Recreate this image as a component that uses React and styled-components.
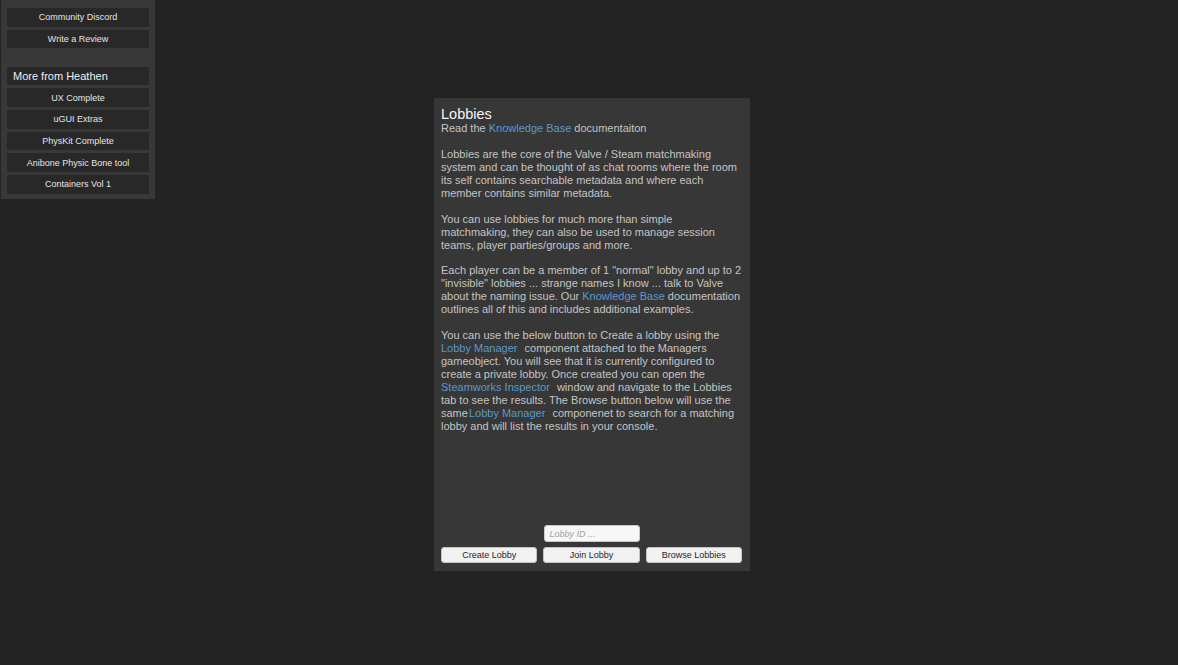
import React from "react";
import styled, { createGlobalStyle } from "styled-components";

const Global = createGlobalStyle`
  html, body {
    margin: 0;
    padding: 0;
    background: #232323;
  }
  body {
    font-family: "Liberation Sans", Arial, sans-serif;
  }
  * { box-sizing: border-box; }
`;

const Page = styled.div`
  width: 1178px;
  height: 665px;
  display: grid;
  grid-template: 1fr / 1fr;
  background: #232323;
  overflow: hidden;
`;

const SidePanel = styled.nav`
  grid-area: 1 / 1;
  align-self: start;
  justify-self: start;
  margin-left: 1px;
  width: 154px;
  background: #383838;
  padding: 8px 6px 5.4px 6px;
  display: flex;
  flex-direction: column;
  gap: 3px;
`;

const SideButton = styled.button`
  height: 18.7px;
  border: none;
  border-radius: 1px;
  background: #282828;
  color: #e4e4e4;
  font-family: "Liberation Sans", Arial, sans-serif;
  font-size: 9px;
  padding: 0;
  display: flex;
  align-items: center;
  justify-content: center;
  cursor: pointer;
`;

const SideHeader = styled.div`
  height: 18.7px;
  margin-top: 15.3px;
  background: #282828;
  color: #f0f0f0;
  font-size: 11px;
  display: flex;
  align-items: center;
  padding-left: 6px;
`;

const MainPanel = styled.section`
  grid-area: 1 / 1;
  align-self: center;
  justify-self: center;
  margin-left: 6px;
  margin-top: 4px;
  width: 316px;
  height: 473px;
  background: #373737;
  padding: 7.5px 8px 8px 7px;
  display: flex;
  flex-direction: column;
`;

const Title = styled.h1`
  margin: 0;
  font-weight: normal;
  font-size: 14.5px;
  line-height: 16px;
  color: #f4f4f4;
`;

const Body = styled.div`
  font-size: 11px;
  line-height: 12.95px;
  color: #c4c4c4;
  white-space: nowrap;
  margin-top: 0.5px;
`;

const Para = styled.p`
  margin: 0 0 12.95px 0;
`;

const Link = styled.a`
  color: #5a97cc;
  text-decoration: none;
  margin-right: ${(p) => (p.$pad ? "4px" : "0")};
  margin-left: ${(p) => (p.$lead ? "1px" : "0")};
`;

const Spacer = styled.div`
  flex: 1;
`;

const InputRow = styled.div`
  display: flex;
  justify-content: center;
  margin-bottom: 5px;
`;

const IdInput = styled.input`
  width: 96px;
  height: 17px;
  border: 1px solid #c9c9c9;
  border-radius: 3px;
  background: #f7f7f7;
  padding: 0 0 0 5px;
  font-family: "Liberation Sans", Arial, sans-serif;
  font-size: 9px;
  font-style: italic;
  color: #333;
  outline: none;
  &::placeholder {
    color: #a0a0a0;
    font-style: italic;
  }
`;

const ButtonRow = styled.div`
  display: flex;
  gap: 6px;
`;

const ActionButton = styled.button`
  flex: 1;
  height: 16px;
  border: 1px solid #c4c4c4;
  border-radius: 3px;
  background: #f1f1f1;
  color: #262626;
  font-family: "Liberation Sans", Arial, sans-serif;
  font-size: 9px;
  padding: 0;
  cursor: pointer;
`;

const sideItems = [
  "UX Complete",
  "uGUI Extras",
  "PhysKit Complete",
  "Anibone Physic Bone tool",
  "Containers Vol 1",
];

export default function App() {
  return (
    <>
      <Global />
      <Page>
        <SidePanel>
          <SideButton>Community Discord</SideButton>
          <SideButton>Write a Review</SideButton>
          <SideHeader>More from Heathen</SideHeader>
          {sideItems.map((t) => (
            <SideButton key={t}>{t}</SideButton>
          ))}
        </SidePanel>

        <MainPanel>
          <Title>Lobbies</Title>
          <Body>
            <Para>
              Read the <Link>Knowledge Base</Link> documentaiton
            </Para>
            <Para>
              Lobbies are the core of the Valve / Steam matchmaking
              <br />
              system and can be thought of as chat rooms where the room
              <br />
              its self contains searchable metadata and where each
              <br />
              member contains similar metadata.
            </Para>
            <Para>
              You can use lobbies for much more than simple
              <br />
              matchmaking, they can also be used to manage session
              <br />
              teams, player parties/groups and more.
            </Para>
            <Para>
              Each player can be a member of 1 "normal" lobby and up to 2
              <br />
              "invisible" lobbies ... strange names I know ... talk to Valve
              <br />
              about the naming issue. Our <Link>Knowledge Base</Link> documentation
              <br />
              outlines all of this and includes additional examples.
            </Para>
            <Para>
              You can use the below button to Create a lobby using the
              <br />
              <Link $pad>Lobby Manager</Link> component attached to the Managers
              <br />
              gameobject. You will see that it is currently configured to
              <br />
              create a private lobby. Once created you can open the
              <br />
              <Link $pad>Steamworks Inspector</Link> window and navigate to the Lobbies
              <br />
              tab to see the results. The Browse button below will use the
              <br />
              same<Link $pad $lead>Lobby Manager</Link> componenet to search for a matching
              <br />
              lobby and will list the results in your console.
            </Para>
          </Body>
          <Spacer />
          <InputRow>
            <IdInput placeholder="Lobby ID ..." />
          </InputRow>
          <ButtonRow>
            <ActionButton>Create Lobby</ActionButton>
            <ActionButton>Join Lobby</ActionButton>
            <ActionButton>Browse Lobbies</ActionButton>
          </ButtonRow>
        </MainPanel>
      </Page>
    </>
  );
}
